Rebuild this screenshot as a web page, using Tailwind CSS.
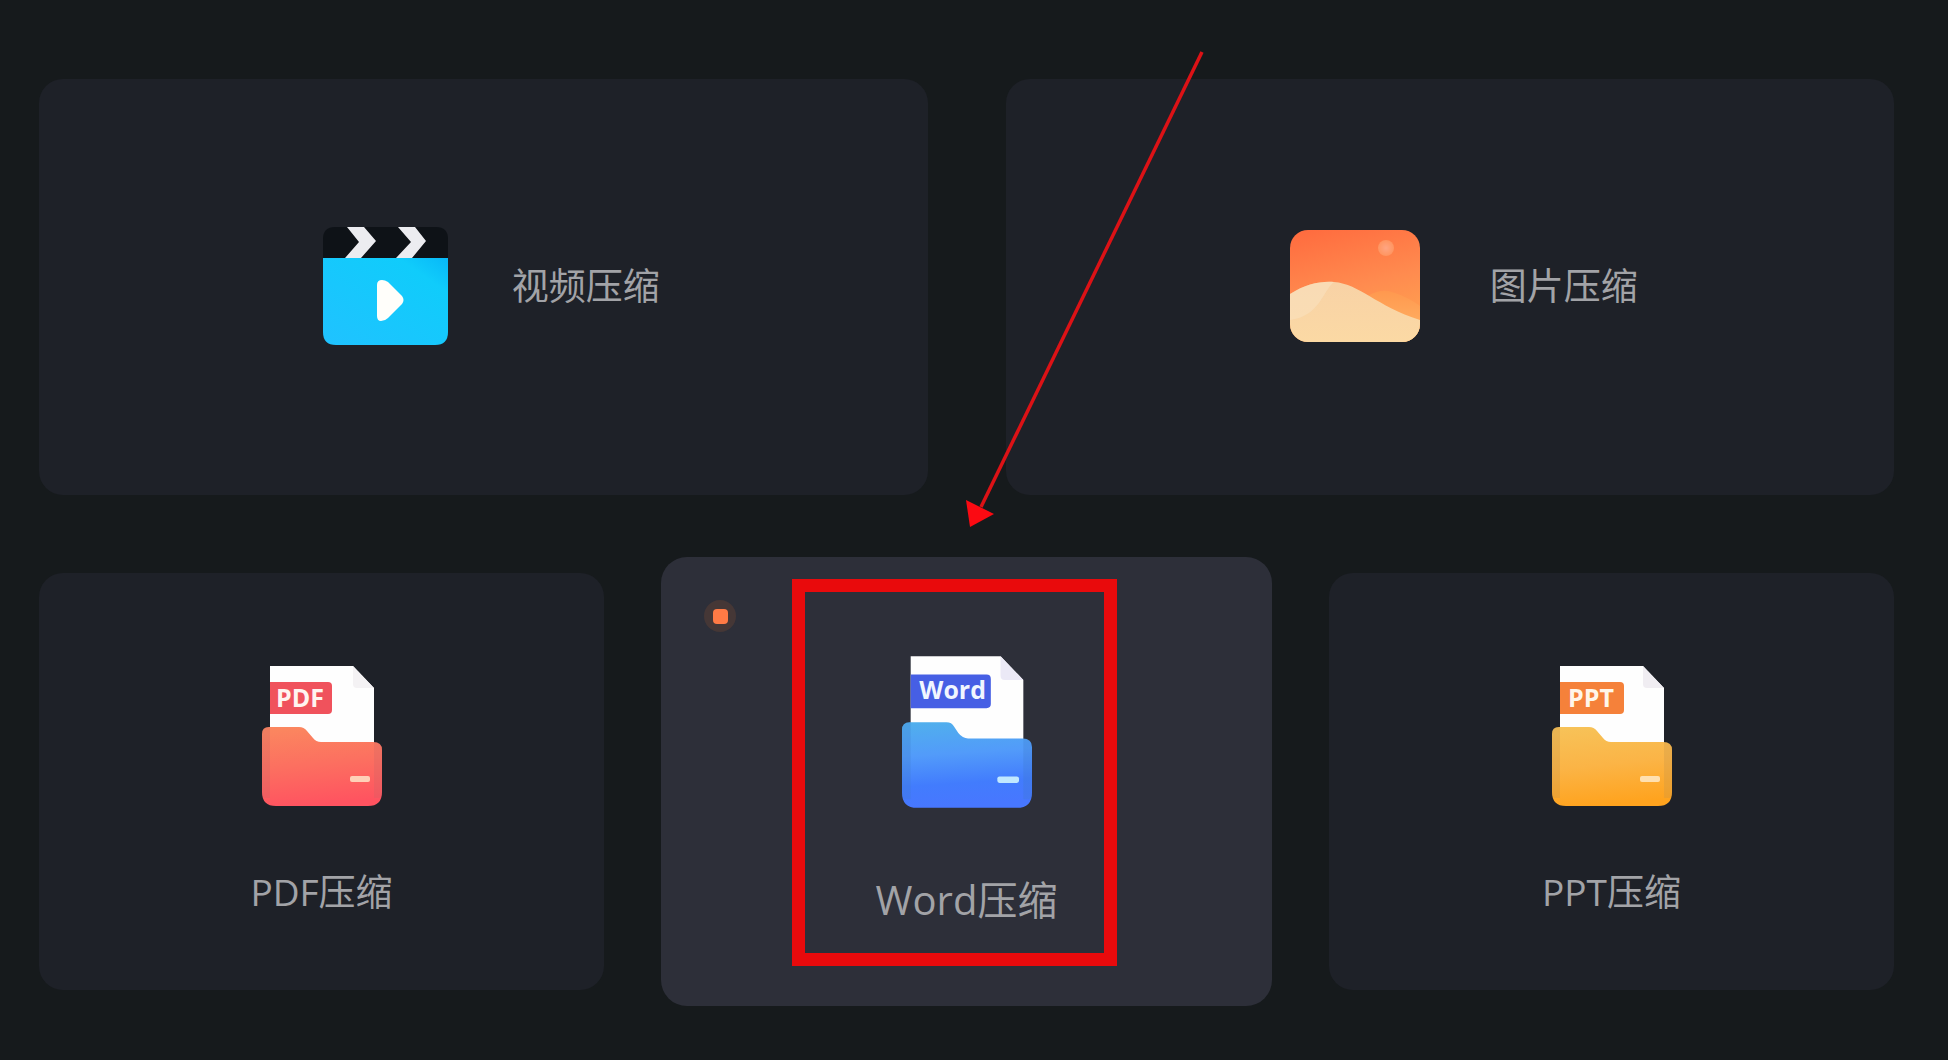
<!DOCTYPE html>
<html lang="zh-CN">
<head>
<meta charset="utf-8">
<meta name="viewport" content="width=device-width, initial-scale=1">
<title>文件压缩</title>
<script src="https://cdn.jsdelivr.net/npm/@tailwindcss/browser@4"></script>
</head>
<body class="min-h-screen overflow-x-hidden bg-[#161a1c] font-['Open_Sans','Noto_Sans_CJK_SC',sans-serif] text-[#a2a3a7]">
<main class="flex flex-col gap-[78px] pt-[79px] pr-[54px] pb-16 pl-[39px]">

  <div class="grid grid-cols-2 gap-[78px]">
    <button type="button" class="flex h-[416px] items-center justify-center gap-16 rounded-3xl bg-[#1e2128] pb-0.5 pl-4">
      <svg class="h-[118px] w-[125px]" viewBox="0 0 125 118" aria-hidden="true">
        <defs>
          <linearGradient id="video" x1="1" y1="0" x2="0" y2="1"><stop offset="0" stop-color="#08b8f8"/><stop offset=".2" stop-color="#10ccfb"/><stop offset="1" stop-color="#20c2ff"/></linearGradient>
        </defs>
        <path d="M0 31V12Q0 0 12 0H113Q125 0 125 12V31Z" fill="#0e1217"/>
        <path d="M24 0H41L53 14L38 31H22L36 15ZM75 0H92L103 14L89 31H73L88 15Z" fill="#ececf0"/>
        <path d="M0 31H125V105Q125 118 112 118H13Q0 118 0 105Z" fill="url(#video)"/>
        <path d="M54 58Q54 53 59 53Q62 53 65 55L79 69Q82 73 79 77L65 91Q62 94 58 94Q54 94 54 89Z" fill="#fffefa"/>
      </svg>
      <span class="text-[37px] leading-[48px]">视频压缩</span>
    </button>

    <button type="button" class="flex h-[416px] items-center justify-center gap-[70px] rounded-3xl bg-[#1e2128] pb-0.5 pl-7">
      <svg class="h-[112px] w-[130px]" viewBox="0 0 130 112" aria-hidden="true">
        <defs>
          <linearGradient id="sky" x1="0" y1="0" x2=".3" y2="1"><stop offset="0" stop-color="#ff6a3e"/><stop offset=".6" stop-color="#ff8b4f"/><stop offset="1" stop-color="#ffa050"/></linearGradient>
          <linearGradient id="sand" x1="0" y1="0" x2="0" y2="1"><stop offset="0" stop-color="#f8d2a6"/><stop offset="1" stop-color="#fbd9a4"/></linearGradient>
          <linearGradient id="dune" x1="0" y1="0" x2="0" y2="1"><stop offset="0" stop-color="#ff984f"/><stop offset="1" stop-color="#ffb868"/></linearGradient>
          <radialGradient id="sun"><stop offset="0" stop-color="#ffa582"/><stop offset="1" stop-color="#ff9560"/></radialGradient>
          <clipPath id="frame"><rect width="130" height="112" rx="18"/></clipPath>
        </defs>
        <g clip-path="url(#frame)">
          <rect width="130" height="112" fill="url(#sky)"/>
          <circle cx="96" cy="18" r="8" fill="url(#sun)"/>
          <path d="M60 80Q84 56 102 62Q118 67 130 76V112H60Z" fill="url(#dune)"/>
          <path d="M0 64C16 54 30 51 44 52C70 54 86 76 130 90V112H0Z" fill="url(#sand)"/>
          <path d="M0 64C16 54 30 51 44 52C32 62 30 86 0 90Z" fill="#fae4c4" opacity=".5"/>
        </g>
      </svg>
      <span class="text-[37px] leading-[48px]">图片压缩</span>
    </button>
  </div>

  <div class="grid grid-cols-3 gap-20">
    <button type="button" class="flex h-[417px] flex-col items-center justify-start gap-[62px] rounded-3xl bg-[#1e2128] pt-[93px]">
      <svg class="h-[140px] w-[120px]" viewBox="0 0 120 140" aria-hidden="true">
        <defs>
          <linearGradient id="pdf" x1=".2" y1="0" x2=".35" y2="1"><stop offset="0" stop-color="#fb875f"/><stop offset=".5" stop-color="#fc6f60"/><stop offset="1" stop-color="#ff5360"/></linearGradient>
        </defs>
        <path d="M8 0H91L112 22V100H8Z" fill="#fefefe"/>
        <path d="M91 0L112 22H95Q91 22 91 18Z" fill="#f4f2f4"/>
        <path d="M8 16H66Q70 16 70 20V44Q70 48 66 48H8Z" fill="#f0525c"/>
        <text x="14" y="41" class="font-['Open_Sans',sans-serif] text-[25px] font-bold" fill="#fff4f0">PDF</text>
        <path d="M0 68Q0 61 7 61H37Q42 61 45 65L51 72Q54 76 59 76H111Q120 76 120 84V126Q120 140 106 140H14Q0 140 0 126Z" fill="url(#pdf)"/>
        <path d="M0 68Q0 61 7 61H8V132H2Q0 130 0 126ZM112 76Q120 76 120 84V126Q120 130 118 132H112Z" fill="#c66462" opacity=".25"/>
        <rect x="88" y="110" width="20" height="6" rx="2" fill="#ffd0b8"/>
      </svg>
      <span class="text-[37px] leading-[48px]">PDF压缩</span>
    </button>

    <button type="button" class="relative -mx-[23px] -my-4 flex h-[449px] flex-col items-center justify-start gap-[66px] rounded-[26px] bg-[#2d2f39] pt-[99px]">
      <span class="absolute top-[43px] left-[43px] flex size-8 items-center justify-center rounded-full bg-[#453736]"><span class="size-[15px] rounded bg-[#ff7a45]"></span></span>
      <svg class="h-[152px] w-[130px]" viewBox="0 0 120 140" aria-hidden="true">
        <defs>
          <linearGradient id="word" x1="0" y1="0" x2=".1" y2="1"><stop offset="0" stop-color="#50b0ec"/><stop offset=".4" stop-color="#529bfa"/><stop offset=".75" stop-color="#427cfd"/><stop offset="1" stop-color="#4777ff"/></linearGradient>
        </defs>
        <path d="M8 0H91L112 22V100H8Z" fill="#fefefe"/>
        <path d="M91 0L112 22H95Q91 22 91 18Z" fill="#ebe9f6"/>
        <path d="M8 17H78Q82 17 82 21V44Q82 48 78 48H8Z" fill="#465fe4"/>
        <text x="16" y="40" class="font-['Open_Sans',sans-serif] text-[23px] font-bold" fill="#f0f6ff">Word</text>
        <path d="M0 68Q0 61 7 61H41Q46 61 48 65L52 71Q56 76 61 76H111Q120 76 120 84V126Q120 140 106 140H14Q0 140 0 126Z" fill="url(#word)"/>
        <path d="M0 68Q0 61 7 61H8V132H2Q0 130 0 126ZM112 76Q120 76 120 84V126Q120 130 118 132H112Z" fill="#3b78c8" opacity=".25"/>
        <rect x="88" y="111" width="20" height="6" rx="2" fill="#c0e8ff"/>
      </svg>
      <span class="text-[40px] leading-[52px]">Word压缩</span>

      <span class="pointer-events-none absolute top-[22px] left-1/2 -ml-[175px] h-[387px] w-[325px] border-[13px] border-[#e90a0c]"></span>
      <svg class="pointer-events-none absolute -top-[508px] left-1/2 -ml-[7px] h-[480px] w-[250px]" viewBox="0 0 250 480" aria-hidden="true">
        <path d="M242 3L21 458" stroke="#dc1216" stroke-width="3.5" fill="none"/>
        <path d="M6 451L34 465L10 478Z" fill="#fb0a12"/>
      </svg>
    </button>

    <button type="button" class="flex h-[417px] flex-col items-center justify-start gap-[62px] rounded-3xl bg-[#1e2128] pt-[93px]">
      <svg class="h-[140px] w-[120px]" viewBox="0 0 120 140" aria-hidden="true">
        <defs>
          <linearGradient id="ppt" x1=".2" y1="0" x2=".35" y2="1"><stop offset="0" stop-color="#f7c258"/><stop offset=".5" stop-color="#fbb446"/><stop offset="1" stop-color="#ffa31e"/></linearGradient>
        </defs>
        <path d="M8 0H91L112 22V100H8Z" fill="#fefefe"/>
        <path d="M91 0L112 22H95Q91 22 91 18Z" fill="#f0edf2"/>
        <path d="M8 16H68Q72 16 72 20V44Q72 48 68 48H8Z" fill="#f5813a"/>
        <text x="16" y="41" class="font-['Open_Sans',sans-serif] text-[25px] font-bold" fill="#fff6ea">PPT</text>
        <path d="M0 68Q0 61 7 61H37Q42 61 45 65L51 72Q54 76 59 76H111Q120 76 120 84V126Q120 140 106 140H14Q0 140 0 126Z" fill="url(#ppt)"/>
        <path d="M0 68Q0 61 7 61H8V132H2Q0 130 0 126ZM112 76Q120 76 120 84V126Q120 130 118 132H112Z" fill="#c8964a" opacity=".3"/>
        <rect x="88" y="110" width="20" height="6" rx="2" fill="#ffe0b0"/>
      </svg>
      <span class="text-[37px] leading-[48px]">PPT压缩</span>
    </button>
  </div>
</main>
</body>
</html>
